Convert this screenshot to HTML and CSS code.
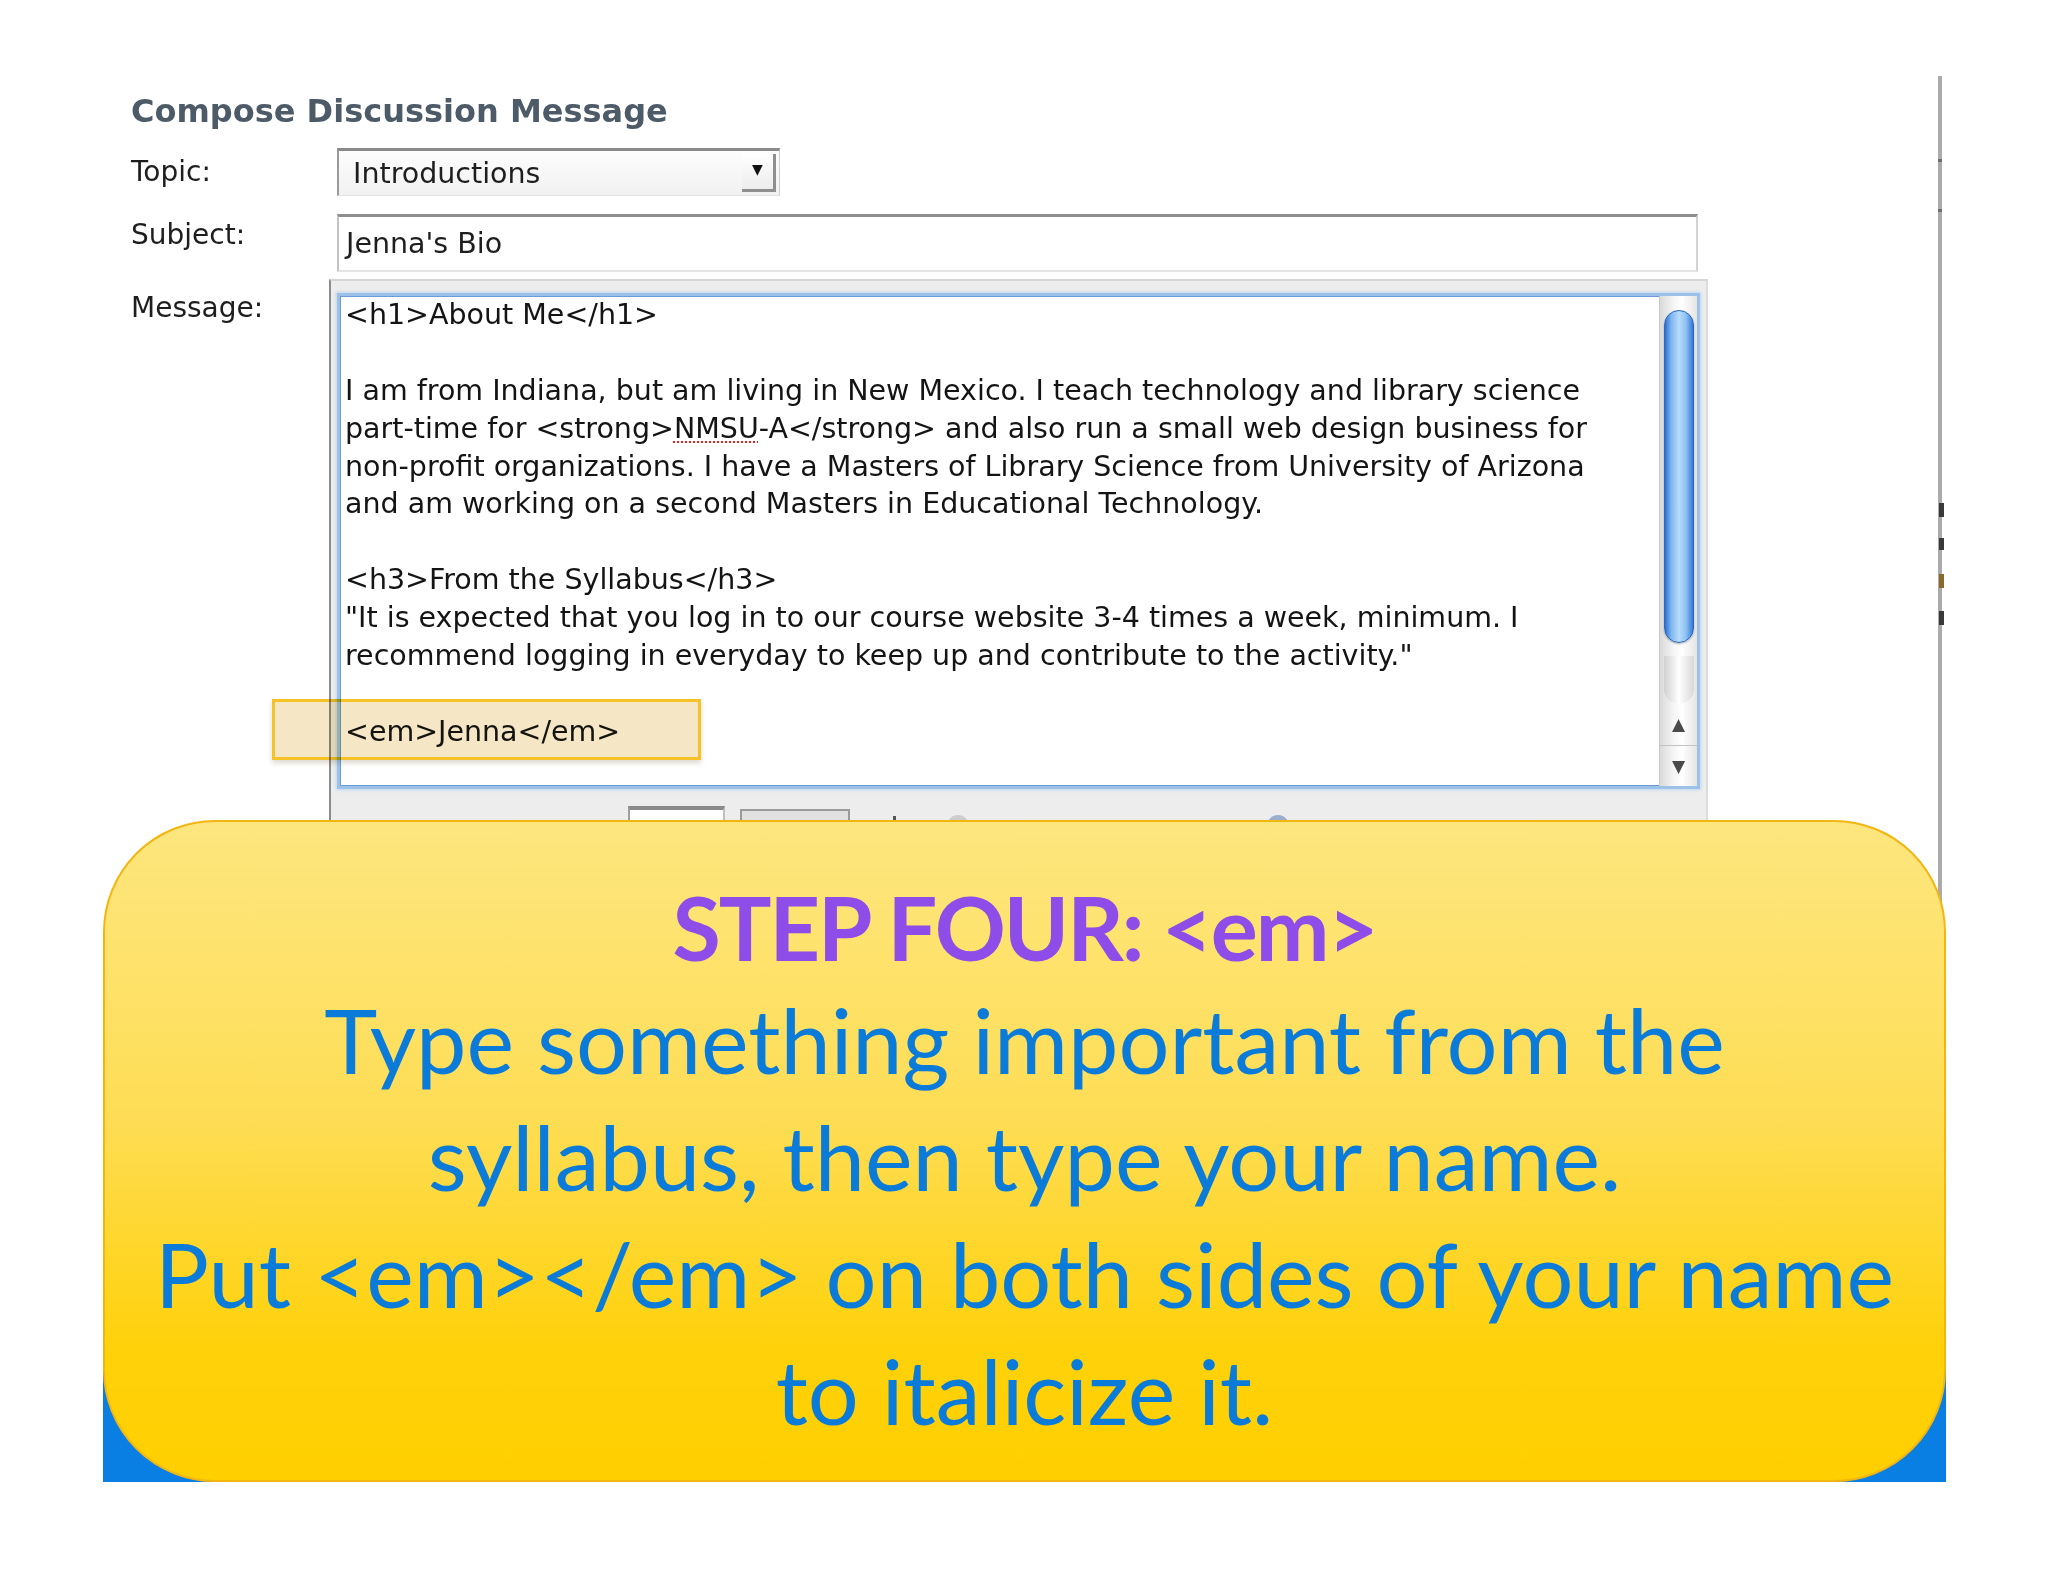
FILE: index.html
```html
<!DOCTYPE html>
<html>
<head>
<meta charset="utf-8">
<title>Compose Discussion Message</title>
<link rel="stylesheet" href="styles.css">
</head>
<body>
<div class="page">
  <div class="window">
    <h1 class="title">Compose Discussion Message</h1>
    <div class="row row-topic">
      <div class="label">Topic:</div>
      <div class="select"><span class="select-text">Introductions</span><span class="select-btn">▼</span></div>
    </div>
    <div class="row row-subject">
      <div class="label">Subject:</div>
      <div class="input">Jenna's Bio</div>
    </div>
    <div class="row row-message">
      <div class="label">Message:</div>
      <div class="frame">
        <div class="textarea">
          <div class="content">
            <div class="line">&lt;h1&gt;About Me&lt;/h1&gt;</div>
            <div class="line">&nbsp;</div>
            <div class="line">I am from Indiana, but am living in New Mexico. I teach technology and library science</div>
            <div class="line">part-time for &lt;strong&gt;<span class="spell">NMSU</span>-A&lt;/strong&gt; and also run a small web design business for</div>
            <div class="line">non-profit organizations. I have a Masters of Library Science from University of Arizona</div>
            <div class="line">and am working on a second Masters in Educational Technology.</div>
            <div class="line">&nbsp;</div>
            <div class="line">&lt;h3&gt;From the Syllabus&lt;/h3&gt;</div>
            <div class="line">"It is expected that you log in to our course website 3-4 times a week, minimum. I</div>
            <div class="line">recommend logging in everyday to keep up and contribute to the activity."</div>
            <div class="line">&nbsp;</div>
            <div class="line">&lt;em&gt;Jenna&lt;/em&gt;</div>
          </div>
          <div class="scrollbar">
            <div class="track">
              <div class="thumb"></div>
            </div>
            <div class="arrows">
              <div class="arrow">▲</div>
              <div class="arrow">▼</div>
            </div>
          </div>
        </div>
        <div class="controls">
          <span class="ctl-text">Width of editor</span>
          <span class="ctl-box"></span>
          <span class="ctl-btn"></span>
          <span class="ctl-dot"></span>
          <span class="ctl-radio"></span>
          <span class="ctl-radio ctl-radio2"></span>
        </div>
      </div>
    </div>
    <span class="tick tick1"></span>
    <span class="tick tick2"></span>
    <span class="frag frag1"></span>
    <span class="frag frag2"></span>
    <span class="frag frag3"></span>
    <span class="frag frag4"></span>
  </div>

  <div class="highlight"></div>

  <div class="callout">
    <div class="callout-back"></div>
    <div class="callout-box">
      <div class="step">STEP FOUR: &lt;em&gt;</div>
      <div class="desc">Type something important from the<br>syllabus, then type your name.<br>Put &lt;em&gt;&lt;/em&gt; on both sides of your name<br>to italicize it.</div>
    </div>
  </div>
</div>
</body>
</html>
```

FILE: styles.css
```css
html, body {
  margin: 0;
  padding: 0;
  background: #ffffff;
}

.page {
  position: relative;
  width: 2048px;
  height: 1582px;
  overflow: hidden;
  background: #ffffff;
  font-family: "DejaVu Sans", Verdana, sans-serif;
}

.window {
  position: relative;
  margin-top: 76px;
  width: 1942px;
  height: 900px;
  box-sizing: border-box;
  padding: 15px 0 0 131px;
  border-right: 4px solid #ababab;
}

.tick {
  position: absolute;
  right: -4px;
  width: 4px;
  height: 3px;
  background: #6e6e6e;
}

.tick1 { top: 83px; }
.tick2 { top: 133px; }

.frag {
  position: absolute;
  right: -6px;
  width: 5px;
  background: #3a3a3a;
}

.frag1 { top: 427px; height: 14px; }
.frag2 { top: 462px; height: 12px; }
.frag3 { top: 498px; height: 14px; background: #8a6a2a; }
.frag4 { top: 535px; height: 14px; }

.title {
  margin: 0;
  font-family: "DejaVu Sans", Verdana, sans-serif;
  font-weight: bold;
  font-size: 32px;
  line-height: 40px;
  color: #4d5b69;
}

.row {
  display: flex;
  align-items: flex-start;
}

.label {
  width: 206px;
  flex: none;
  font-size: 28px;
  line-height: 36px;
  color: #1e1e1e;
}

.row-topic {
  margin-top: 17px;
  align-items: center;
}

.row-subject {
  margin-top: 18px;
}

.row-subject .label {
  padding-top: 3px;
}

.row-message {
  margin-top: 7px;
}

.row-message .label {
  padding-top: 11px;
}

/* select */
.select {
  position: relative;
  width: 443px;
  height: 48px;
  box-sizing: border-box;
  border-top: 3px solid #8a8a8a;
  border-left: 2px solid #9a9a9a;
  border-right: 1px solid #cfcfcf;
  border-bottom: 1px solid #e2e2e2;
  background: linear-gradient(#fdfdfd, #f1f1f1);
  display: flex;
  align-items: center;
  font-size: 28.5px;
  color: #1e1e1e;
}

.select-text {
  padding-left: 14px;
  flex: 1;
}

.select-btn {
  width: 34px;
  height: 38px;
  margin-right: 3px;
  box-sizing: border-box;
  border-right: 3px solid #8f8f8f;
  border-bottom: 3px solid #8f8f8f;
  background: linear-gradient(#ffffff, #ececec);
  font-size: 14px;
  color: #111;
  display: flex;
  align-items: center;
  justify-content: center;
  padding-bottom: 6px;
}

/* input */
.input {
  width: 1361px;
  height: 58px;
  box-sizing: border-box;
  border-top: 3px solid #8e8e8e;
  border-left: 2px solid #c4c4c4;
  border-right: 2px solid #d4d4d4;
  border-bottom: 2px solid #e4e4e4;
  background: #ffffff;
  font-size: 28.5px;
  color: #1e1e1e;
  padding: 9px 0 0 7px;
  line-height: 36px;
}

/* message frame */
.frame {
  margin-left: -8px;
  width: 1379px;
  height: 600px;
  box-sizing: border-box;
  background: #ededed;
  border-left: 2px solid #8c8c8c;
  border-top: 2px solid #d6d6d6;
  border-right: 2px solid #dcdcdc;
  padding: 12px 6px 0 6px;
}

.textarea {
  display: flex;
  height: 496px;
  box-sizing: border-box;
  background: #ffffff;
  border: 3px solid #9cc2ea;
  box-shadow: inset 0 0 0 1px #6b9bd4, 0 0 3px 1px #bcd7f2;
}

.content {
  flex: 1;
  padding: 0 0 0 5px;
  font-size: 28.5px;
  line-height: 37.9px;
  color: #141414;
  overflow: hidden;
}

.line {
  white-space: pre;
  height: 37.9px;
}

.spell {
  text-decoration: underline dotted #e02020;
  text-decoration-thickness: 2px;
  text-underline-offset: 4px;
}

/* scrollbar */
.scrollbar {
  width: 37px;
  flex: none;
  display: flex;
  flex-direction: column;
  background: linear-gradient(to right, #dadada, #f4f4f4 35%, #ffffff 60%, #e4e4e4);
  border-left: 1px solid #c8c8c8;
}

.track {
  flex: 1;
  padding: 14px 3px 0 4px;
  position: relative;
}

.track::after {
  content: "";
  position: absolute;
  left: 4px;
  right: 3px;
  top: 360px;
  height: 48px;
  border-radius: 0 0 16px 16px;
  background: linear-gradient(to right, #d0d0d0, #ffffff 50%, #d8d8d8);
}

.thumb {
  height: 333px;
  border-radius: 16px;
  box-sizing: border-box;
  border: 1px solid #2a66c2;
  background: linear-gradient(to right, #2f6fd0, #7db6ee 22%, #b8dbfb 50%, #8cc2f3 75%, #3677d6);
  box-shadow: 0 1px 2px rgba(0,0,0,0.3);
}

.arrows {
  height: 82px;
  display: flex;
  flex-direction: column;
}

.arrow {
  flex: 1;
  display: flex;
  align-items: center;
  justify-content: center;
  font-size: 17px;
  color: #4a4a4a;
}

.arrow + .arrow {
  border-top: 1px solid #c2c2c2;
}

/* controls under the textarea (cut off) */
.controls {
  position: relative;
  height: 60px;
  margin-top: 17px;
}

.ctl-text {
  position: absolute;
  left: 14px;
  top: 10px;
  font-size: 22px;
  color: #666;
}

.ctl-box {
  position: absolute;
  left: 291px;
  top: 0;
  width: 97px;
  height: 36px;
  box-sizing: border-box;
  background: #ffffff;
  border-top: 4px solid #8a8a8a;
  border-left: 2px solid #a0a0a0;
  border-right: 2px solid #c0c0c0;
}

.ctl-btn {
  position: absolute;
  left: 403px;
  top: 3px;
  width: 110px;
  height: 36px;
  box-sizing: border-box;
  background: #e0e0e0;
  border: 2px solid #9a9a9a;
}

.ctl-dot {
  position: absolute;
  left: 556px;
  top: 10px;
  width: 3px;
  height: 4px;
  background: #555;
}

.ctl-radio {
  position: absolute;
  left: 610px;
  top: 9px;
  width: 22px;
  height: 22px;
  border-radius: 50%;
  background: #cdcdcd;
}

.ctl-radio2 {
  left: 930px;
  background: #9aaed0;
}

/* highlight around <em>Jenna</em> */
.highlight {
  position: absolute;
  left: 272px;
  top: 699px;
  width: 429px;
  height: 61px;
  box-sizing: border-box;
  border: 3px solid #f5c228;
  background: rgba(236, 208, 140, 0.5);
  mix-blend-mode: multiply;
  box-shadow: 0 3px 5px rgba(120, 100, 60, 0.25);
}

/* callout */
.callout {
  position: absolute;
  left: 103px;
  top: 820px;
  width: 1843px;
  height: 662px;
}

.callout-back {
  position: absolute;
  left: 0;
  right: 0;
  bottom: 0;
  height: 120px;
  background: #0a7fe3;
}

.callout-box {
  position: relative;
  height: 100%;
  box-sizing: border-box;
  border-radius: 112px;
  border: 2px solid #f3b510;
  background: linear-gradient(#fde67f 0%, #fedd55 45%, #ffd10a 80%, #ffcf00 100%);
  padding-top: 47px;
  text-align: center;
  font-family: Lato, "Open Sans", sans-serif;
}

.step {
  font-weight: bold;
  font-size: 88px;
  letter-spacing: -2px;
  line-height: 117px;
  color: #8e4ce8;
}

.desc {
  margin-top: -5px;
  font-size: 90px;
  line-height: 117px;
  color: #0b7bd9;
}
```
